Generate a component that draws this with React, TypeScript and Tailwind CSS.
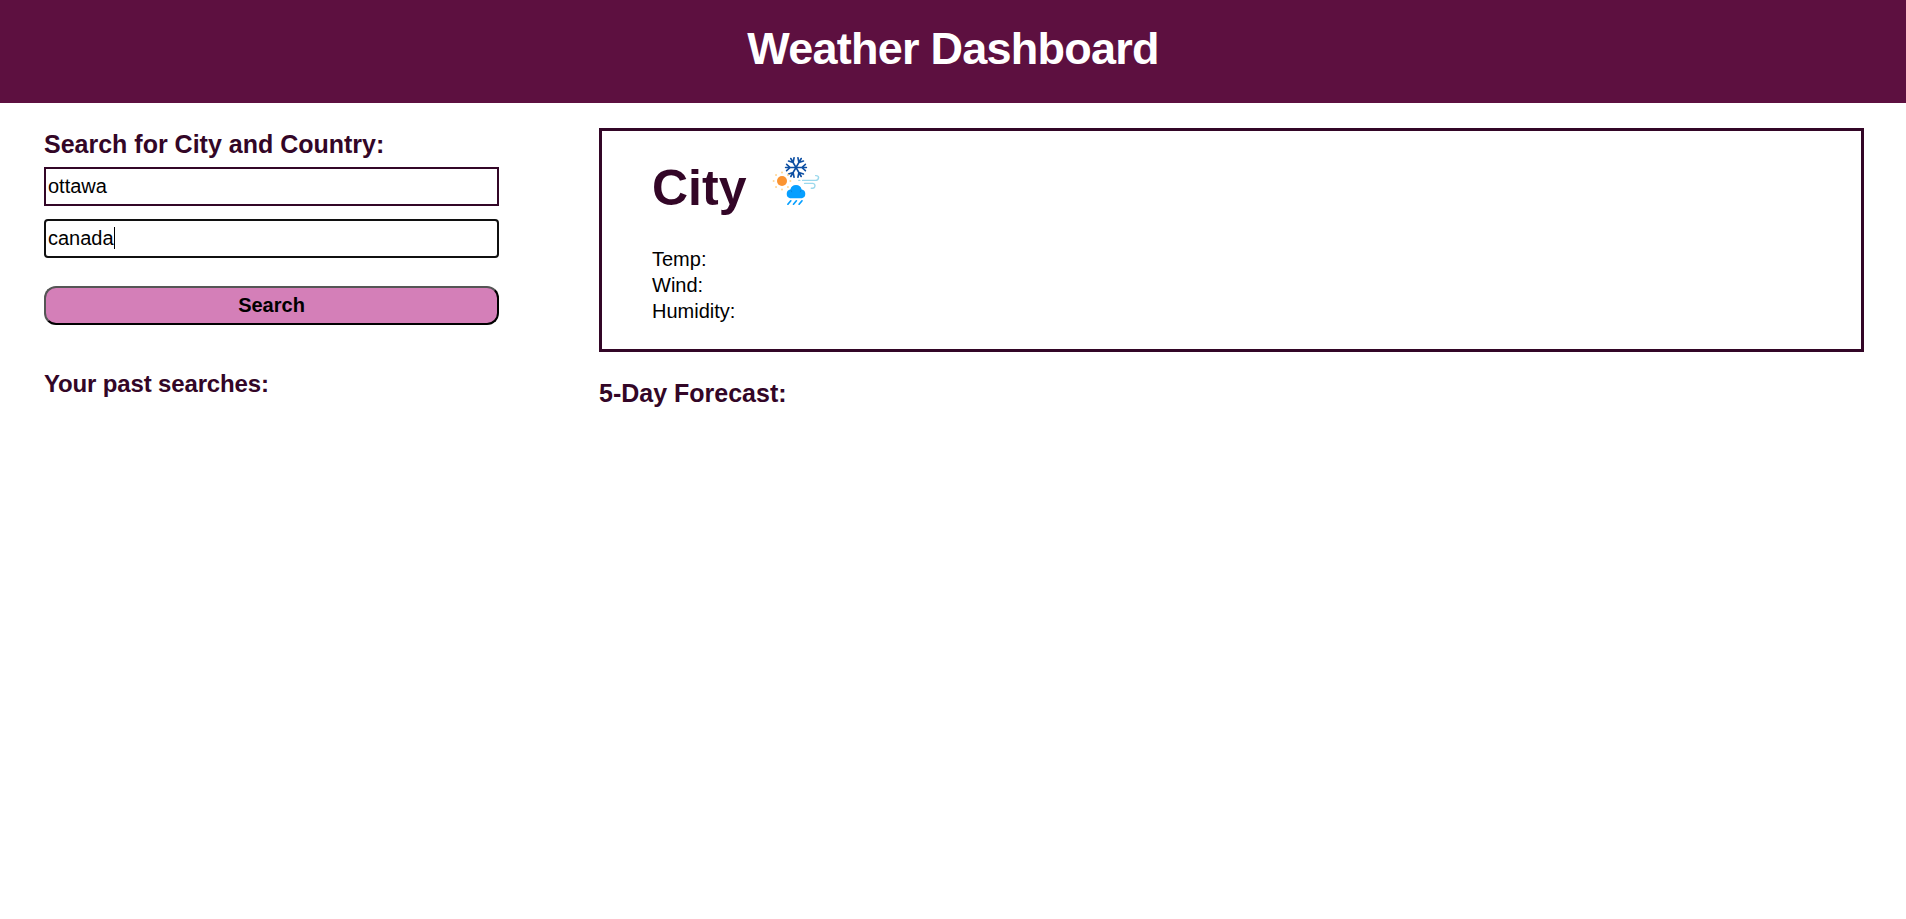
function WeatherIcon() {
  return (
    <svg width="48" height="48" viewBox="0 0 48 48" fill="none" className="shrink-0">
      <g stroke="#0d4fa3" strokeWidth="1.6" strokeLinecap="round">
        {[0, 60, 120, 180, 240, 300].map((a) => (
          <path
            key={a}
            d="M24 10.5H34.4M29.8 10.5L33.4 7.3M29.8 10.5L33.4 13.7"
            transform={`rotate(${a} 24 10.5)`}
          />
        ))}
      </g>
      <g fill="#ffd796">
        {[0, 45, 90, 135, 180, 225, 270, 315].map((a) => (
          <circle key={a} cx="18.4" cy="24" r="1" transform={`rotate(${a} 10 24)`} />
        ))}
      </g>
      <circle cx="10" cy="24" r="5" fill="#fb9431" />
      <g stroke="#9bd8ec" strokeWidth="1.4" strokeLinecap="round">
        <path d="M26.8 23.4H27.8M30.6 23.4H43.4A3.2 3.2 0 0 0 46.6 20.6Q46.5 18.5 43.6 18.6" />
        <path d="M32.6 26.4H41A2.5 2.5 0 0 1 41 31.3H39.3" />
      </g>
      <path
        d="M18 41.2A4.4 4.4 0 0 1 18.4 32.6A5.7 5.7 0 0 1 29.6 32.6A4.4 4.4 0 0 1 30 41.2Z"
        fill="#069fff"
      />
      <path
        d="M19.8 35.2Q19.4 33.5 18.4 32.8M28.2 35.2Q28.6 33.5 29.6 32.8"
        stroke="#087fd4"
        strokeWidth="0.8"
      />
      <path
        d="M18.8 43.8L15.9 47.2M24.4 43.8L21.5 47.2M30 43.8L27.1 47.2"
        stroke="#069fff"
        strokeWidth="1.7"
        strokeLinecap="round"
      />
    </svg>
  );
}

export default function App() {
  return (
    <div className="min-h-screen bg-white font-['Liberation_Sans',Arial,sans-serif] text-[20px] leading-[26px] text-black">
      <header className="flex h-[103px] justify-center bg-[#5d1040] pt-[20px]">
        <h1 className="text-[45px] leading-[58px] font-bold tracking-[-0.75px] text-white">
          Weather Dashboard
        </h1>
      </header>
      <div className="flex">
        <aside className="ml-[44px] flex w-[455px] flex-col pt-[25px] text-[#330627]">
          <h2 className="text-[25px] leading-[33px] font-bold">Search for City and Country:</h2>
          <input
            defaultValue="ottawa"
            aria-label="City"
            className="mt-[6px] h-[39px] border-2 border-[#330627] px-[2px] text-black outline-none"
          />
          <div className="mt-[13px] flex h-[39px] items-center rounded-[4px] border-2 border-[#101010] px-[2px] pb-px text-black">
            <span className="leading-[24px]">canada</span>
            <span className="h-[22px] w-px bg-black" />
          </div>
          <button className="mt-[28px] h-[39px] rounded-[12px] border-2 border-t-[#555555] border-r-black border-b-black border-l-[#555555] bg-[#d47fb8] pb-[2px] font-bold text-black">
            Search
          </button>
          <h3 className="mt-[43px] text-[24px] leading-[32px] font-bold tracking-[-0.15px]">
            Your past searches:
          </h3>
        </aside>
        <main className="mt-[25px] ml-[100px] w-[1265px]">
          <section className="h-[224px] border-[3px] border-[#330627] pl-[50px]">
            <div className="flex pt-[25px]">
              <h2 className="text-[50px] leading-[65px] font-bold text-[#330627]">City</h2>
              <div className="pt-px pl-[26px]">
                <WeatherIcon />
              </div>
            </div>
            <div className="mt-[25px]">
              <p>Temp:</p>
              <p>Wind:</p>
              <p>Humidity:</p>
            </div>
          </section>
          <h3 className="mt-[25px] text-[25px] leading-[33px] font-bold text-[#330627]">
            5-Day Forecast:
          </h3>
        </main>
      </div>
    </div>
  );
}
